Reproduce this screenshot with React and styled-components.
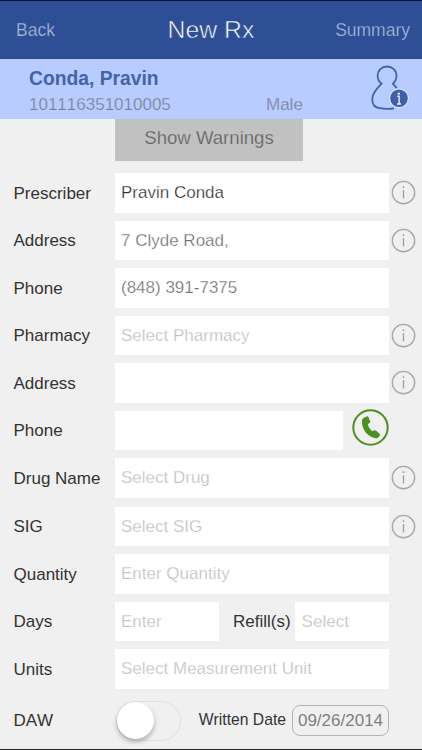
import React from 'react';
import styled, { createGlobalStyle } from 'styled-components';

const GlobalStyle = createGlobalStyle`
  * {
    box-sizing: border-box;
  }
  body {
    margin: 0;
    background: #f0f0f0;
    font-family: 'Liberation Sans', Arial, sans-serif;
    font-size: 17px;
    font-kerning: none;
    overflow: hidden;
  }
`;

const Screen = styled.div`
  display: flex;
  flex-direction: column;
  width: 422px;
  height: 750px;
  background: #f0f0f0;
  border-top: 1px solid #06103a;
  border-bottom: 1px solid #2b2b2b;
  overflow: hidden;
`;

// stroking in the background colour makes the glyphs look lighter
const Light = styled.span`
  -webkit-text-stroke: ${props => props.$thin || '0.25px'} ${props => props.$on || '#fff'};
`;

const NavBar = styled.header`
  flex: none;
  display: grid;
  grid-template-columns: 1fr auto 1fr;
  align-items: center;
  height: 58px;
  padding: 0 12px 0 16px;
  background: #2e4f95;
`;

const NavLink = styled.a`
  color: #a9b9dc;
  font-size: 17.5px;
  justify-self: ${props => (props.$right ? 'end' : 'start')};
`;

const Title = styled.h1`
  margin: 0 4px 1px 0;
  color: #fff;
  font-size: 24.8px;
  font-weight: 400;
`;

const Patient = styled.section`
  flex: none;
  display: flex;
  height: 60px;
  padding-left: 29px;
  background: #b9ccff;
`;

const PatientText = styled.div`
  width: 340px;
  padding-top: 8px;
`;

const PatientName = styled.div`
  color: #4563a8;
  font-size: 19.3px;
  font-weight: 700;
  line-height: 24px;
`;

const PatientMeta = styled.div`
  display: grid;
  grid-template-columns: 237px auto;
  color: #7c8093;
  line-height: 27px;
`;

const Warnings = styled.button`
  flex: none;
  width: 188px;
  height: 42px;
  margin: 0 0 12px 115px;
  padding: 0 0 5px;
  border: 0;
  background: #c1c1c1;
  color: #626262;
  font: 18.6px 'Liberation Sans', Arial, sans-serif;
`;

const Form = styled.div`
  display: flex;
  flex-direction: column;
  gap: 8px;
`;

const Row = styled.div`
  display: grid;
  grid-template-columns: 101px 274px 29px;
  align-items: center;
  height: 39.5px;
  padding-left: 14px;
  margin-top: ${props => props.$top || '0'};
`;

const Label = styled.label`
  color: #333;
  margin-left: -0.5px;
  padding-top: 1.5px;
`;

const Fields = styled.div`
  display: flex;
  align-items: center;
  height: 100%;
`;

const Field = styled.div`
  flex: ${props => (props.$width ? 'none' : '1')};
  width: ${props => props.$width || 'auto'};
  height: 39.5px;
  padding: 1px 0 0 ${props => props.$indent || '6px'};
  background: #fff;
  color: ${props => props.$color || '#c0c0c5'};
  line-height: 38.5px;
  white-space: nowrap;
`;

const RefillLabel = styled(Label)`
  margin: 0 4px 0 14px;
`;

const CallButton = styled.div`
  width: 37px;
  height: 37px;
  margin: -6px 0 0 9px;
`;

const InfoIcon = styled.svg`
  display: block;
  margin-left: 2px;
`;

const SwitchRow = styled(Row)`
  margin-top: 4px;
`;

const SwitchLabel = styled(Label)`
  padding-top: 0;
`;

const Track = styled.div`
  width: 66px;
  height: 40px;
  margin-left: 1px;
  padding: 0.5px 0 0;
  border: 1px solid #e1e1e1;
  border-radius: 20px;
`;

const Knob = styled.div`
  width: 37px;
  height: 37px;
  margin-left: -0.5px;
  border-radius: 50%;
  background: #fff;
  box-shadow: 0 3px 5px rgba(0, 0, 0, 0.28);
`;

const WrittenLabel = styled(Label)`
  margin: 0 6px 0 17.5px;
  padding: 0 0 2px;
  font-size: 15.7px;
  white-space: nowrap;
`;

const DateBox = styled.div`
  flex: none;
  width: 97px;
  height: 31px;
  margin-left: auto;
  border: 1px solid #b4b4b4;
  border-radius: 8px;
  color: #808080;
  line-height: 30px;
  text-align: center;
`;

const Info = () => (
  <InfoIcon width="25" height="25" viewBox="0 0 25 25">
    <circle cx="12.5" cy="12.6" r="11.2" fill="none" stroke="#a8a8a8" strokeWidth="1.4" />
    <path d="M12.5 10.2v8.2" stroke="#9c9c9c" strokeWidth="1.3" />
    <circle cx="12.5" cy="7.2" r="0.9" fill="#9c9c9c" />
  </InfoIcon>
);

const PatientIcon = () => (
  <svg width="44" height="60" viewBox="0 0 44 60">
    <path
      d="M25 49.3C21 50 15 49.800 10.500 49.200C4.500 48.400 2.400 43.500 3.500 38C4.800 32.500 8 29.500 12.600 24.700C9.800 22.500 8.600 19.800 8.600 17C8.600 11.500 12.700 7.500 18 7.500S27.500 11.500 27.500 17C27.500 19.800 26.300 22.500 23.900 24.700L27.800 29.200"
      fill="none"
      stroke="#4062a8"
      strokeWidth="1.8"
    />
    <circle cx="30" cy="39.300" r="9.900" fill="#dbe5ff" />
    <circle cx="30" cy="39.300" r="8.800" fill="#3f60a6" />
    <circle cx="29.800" cy="34.600" r="1.200" fill="#e6edff" />
    <path d="M28.300 37.300h1.800v7.500M28 45h4.100" fill="none" stroke="#e6edff" strokeWidth="1.400" />
  </svg>
);

const PhoneIcon = () => (
  <svg width="37" height="37" viewBox="0 0 37 37">
    <circle cx="18.500" cy="18.500" r="17.200" fill="none" stroke="#4b9120" strokeWidth="2" />
    <path
      d="M11.300 9L14.800 7.400Q15.900 7.100 16.400 8.100L18.200 12.200Q18.500 13.200 17.700 13.800L15.900 15.300C16.300 18.100 17.900 20.500 20.300 22.200L22.600 21.300Q23.600 21 24.200 21.700L27.700 24.900Q28.400 25.700 27.900 26.500L26.200 28.600Q25.500 29.400 23.800 29.200C15.500 28.300 9.900 20.500 9.900 12.300Q10 9.800 11.300 9Z"
      fill="#4b9120"
    />
  </svg>
);

export default function App() {
  return (
    <>
      <GlobalStyle />
      <Screen>
        <NavBar>
          <NavLink><Light $on="#2e4f95">Back</Light></NavLink>
          <Title><Light $on="#2e4f95" $thin="0.6px">New Rx</Light></Title>
          <NavLink $right><Light $on="#2e4f95">Summary</Light></NavLink>
        </NavBar>
        <Patient>
          <PatientText>
            <PatientName>Conda, Pravin</PatientName>
            <PatientMeta>
              <Light $on="#b9ccff">101116351010005</Light>
              <Light $on="#b9ccff">Male</Light>
            </PatientMeta>
          </PatientText>
          <PatientIcon />
        </Patient>
        <Warnings><Light $on="#c1c1c1">Show Warnings</Light></Warnings>
        <Form>
          <Row>
            <Label>Prescriber</Label>
            <Field $color="#303030"><Light>Pravin Conda</Light></Field>
            <Info />
          </Row>
          <Row>
            <Label>Address</Label>
            <Field $color="#707070"><Light>7 Clyde Road,</Light></Field>
            <Info />
          </Row>
          <Row>
            <Label>Phone</Label>
            <Field $color="#707070"><Light>(848) 391-7375</Light></Field>
          </Row>
          <Row>
            <Label>Pharmacy</Label>
            <Field><Light>Select Pharmacy</Light></Field>
            <Info />
          </Row>
          <Row>
            <Label>Address</Label>
            <Field />
            <Info />
          </Row>
          <Row>
            <Label>Phone</Label>
            <Fields>
              <Field $width="228px" />
              <CallButton><PhoneIcon /></CallButton>
            </Fields>
          </Row>
          <Row>
            <Label>Drug Name</Label>
            <Field><Light>Select Drug</Light></Field>
            <Info />
          </Row>
          <Row $top="1px">
            <Label>SIG</Label>
            <Field><Light>Select SIG</Light></Field>
            <Info />
          </Row>
          <Row>
            <Label>Quantity</Label>
            <Field><Light>Enter Quantity</Light></Field>
          </Row>
          <Row>
            <Label>Days</Label>
            <Fields>
              <Field $width="104px"><Light>Enter</Light></Field>
              <RefillLabel>Refill(s)</RefillLabel>
              <Field $indent="7px"><Light>Select</Light></Field>
            </Fields>
          </Row>
          <Row>
            <Label>Units</Label>
            <Field><Light>Select Measurement Unit</Light></Field>
          </Row>
          <SwitchRow>
            <SwitchLabel>DAW</SwitchLabel>
            <Fields>
              <Track><Knob /></Track>
              <WrittenLabel>Written Date</WrittenLabel>
              <DateBox>09/26/2014</DateBox>
            </Fields>
          </SwitchRow>
        </Form>
      </Screen>
    </>
  );
}
